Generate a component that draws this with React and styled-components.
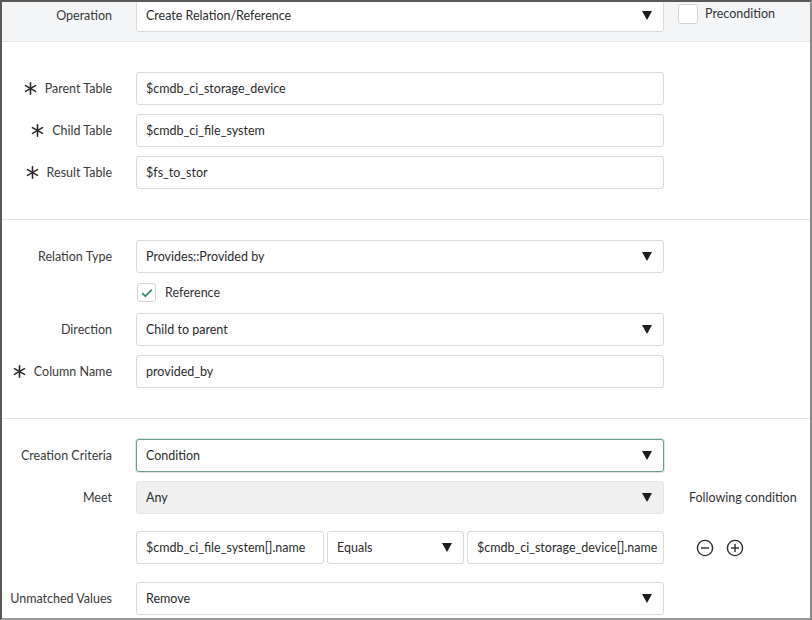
import styled, { createGlobalStyle } from "styled-components";

const GlobalStyle = createGlobalStyle`
  html, body {
    margin: 0;
    padding: 0;
    background: #fff;
  }
  body {
    font-family: "Lato", "Open Sans", sans-serif;
    color: #333;
  }
`;

const Frame = styled.div`
  box-sizing: border-box;
  width: 812px;
  height: 620px;
  border-top: 2px solid #5a5a5a;
  border-left: 2px solid #5a5a5a;
  border-right: 2px solid #8a8a8a;
  border-bottom: 2px solid #9a9a9a;
  overflow: hidden;
  display: flex;
  flex-direction: column;
  background: #fff;
`;

const Section = styled.div`
  display: flex;
  flex-direction: column;
  padding: ${(p) => p.$pad};
  background: ${(p) => (p.$shaded ? "#f4f5f7" : "#fff")};
  border-bottom: ${(p) => (p.$last ? "none" : "1px solid #e2e3e5")};
`;

const Row = styled.div`
  display: grid;
  grid-template-columns: 110px 528px 1fr;
  column-gap: 24px;
  align-items: center;
  margin-top: ${(p) => p.$mt || 0}px;
`;

const Label = styled.div`
  display: flex;
  justify-content: flex-end;
  align-items: center;
  gap: 8px;
  font-size: 12.5px;
  color: #3a3a3a;
  white-space: nowrap;
`;

const Field = styled.div`
  box-sizing: border-box;
  height: ${(p) => p.$h || 33}px;
  display: flex;
  align-items: center;
  justify-content: space-between;
  padding: 0 11px 0 9px;
  font-size: 12.5px;
  color: #2b2b2b;
  white-space: nowrap;
  overflow: hidden;
  background: ${(p) => (p.$muted ? "#f0f0f0" : "#fff")};
  border: 1px solid ${(p) => (p.$focus ? "#6f9c90" : p.$muted ? "#e4e4e4" : "#dadada")};
  border-radius: 3px;
  box-shadow: ${(p) => (p.$focus ? "0 0 0 1px rgba(111,156,144,0.25)" : "none")};
`;

const Side = styled.div`
  display: flex;
  align-items: center;
  gap: ${(p) => p.$gap || 8}px;
  margin-left: ${(p) => p.$ml || 0}px;
  font-size: 12.5px;
  color: #333;
  white-space: nowrap;
`;

const PreconditionCell = styled.div`
  box-sizing: border-box;
  align-self: stretch;
  display: flex;
  align-items: flex-start;
  gap: 7px;
  margin-left: -10px;
  padding-top: 6px;
  font-size: 12.5px;
  color: #333;
  white-space: nowrap;
`;

const PreconditionText = styled.span`
  line-height: 14px;
  margin-top: 3px;
`;

const Box = styled.span`
  box-sizing: border-box;
  width: ${(p) => p.$size}px;
  height: ${(p) => p.$size}px;
  border: 1px solid #d4d4d4;
  border-radius: 3px;
  background: #fff;
  display: inline-flex;
  align-items: center;
  justify-content: center;
  flex: none;
`;

const CheckLine = styled.div`
  display: flex;
  align-items: center;
  gap: 9px;
  height: 19px;
  padding-left: 1px;
  font-size: 12.5px;
  color: #333;
`;

const ConditionGrid = styled.div`
  display: grid;
  grid-template-columns: 188px 137px 1fr;
  column-gap: 3px;
`;

const IconButton = styled.span`
  display: inline-flex;
  width: 18px;
  height: 18px;
`;

const Caret = () => (
  <svg width="10" height="9" viewBox="0 0 10 9">
    <path d="M0 0 H10 L5 9 Z" fill="#1e1e1e" />
  </svg>
);

const Star = () => (
  <svg width="13" height="13" viewBox="0 0 13 13">
    <g stroke="#2a2a2a" strokeWidth="1.6" strokeLinecap="round">
      <line x1="6.5" y1="0.8" x2="6.5" y2="12.2" />
      <line x1="1.5" y1="3.6" x2="11.5" y2="9.4" />
      <line x1="1.5" y1="9.4" x2="11.5" y2="3.6" />
    </g>
  </svg>
);

const Select = ({ value, ...rest }) => (
  <Field {...rest}>
    <span>{value}</span>
    <Caret />
  </Field>
);

const FieldLabel = ({ text, required }) => (
  <Label>
    {required && <Star />}
    <span>{text}</span>
  </Label>
);

const CircleIcon = ({ plus }) => (
  <IconButton>
    <svg width="18" height="18" viewBox="0 0 18 18" fill="none" stroke="#2a2a2a" strokeWidth="1.4">
      <circle cx="9" cy="9" r="7.6" />
      <line x1="5" y1="9" x2="13" y2="9" />
      {plus && <line x1="9" y1="5" x2="9" y2="13" />}
    </svg>
  </IconButton>
);

export default function App() {
  return (
    <>
      <GlobalStyle />
      <Frame>
        <Section $shaded $pad="0 0 9px">
          <Row $mt={-4}>
            <FieldLabel text="Operation" />
            <Select value="Create Relation/Reference" $h={34} />
            <PreconditionCell>
              <Box $size={20} />
              <PreconditionText>Precondition</PreconditionText>
            </PreconditionCell>
          </Row>
        </Section>

        <Section $pad="30px 0 30px">
          <Row>
            <FieldLabel text="Parent Table" required />
            <Field>$cmdb_ci_storage_device</Field>
          </Row>
          <Row $mt={9}>
            <FieldLabel text="Child Table" required />
            <Field>$cmdb_ci_file_system</Field>
          </Row>
          <Row $mt={9}>
            <FieldLabel text="Result Table" required />
            <Field>$fs_to_stor</Field>
          </Row>
        </Section>

        <Section $pad="20px 0 30px">
          <Row>
            <FieldLabel text="Relation Type" />
            <Select value="Provides::Provided by" />
          </Row>
          <Row $mt={10}>
            <span />
            <CheckLine>
              <Box $size={19}>
                <svg width="12" height="10" viewBox="0 0 12 10">
                  <path d="M1.2 5.2 L4.4 8.2 L10.8 1.6" fill="none" stroke="#3f8a6c" strokeWidth="1.8" />
                </svg>
              </Box>
              Reference
            </CheckLine>
          </Row>
          <Row $mt={11}>
            <FieldLabel text="Direction" />
            <Select value="Child to parent" />
          </Row>
          <Row $mt={9}>
            <FieldLabel text="Column Name" required />
            <Field>provided_by</Field>
          </Row>
        </Section>

        <Section $last $pad="20px 0 0">
          <Row>
            <FieldLabel text="Creation Criteria" />
            <Select value="Condition" $focus />
          </Row>
          <Row $mt={9}>
            <FieldLabel text="Meet" />
            <Select value="Any" $muted />
            <Side $ml={1}>Following condition</Side>
          </Row>
          <Row $mt={17}>
            <span />
            <ConditionGrid>
              <Field>$cmdb_ci_file_system[].name</Field>
              <Select value="Equals" />
              <Field>$cmdb_ci_storage_device[].name</Field>
            </ConditionGrid>
            <Side $ml={8} $gap={12}>
              <CircleIcon />
              <CircleIcon plus />
            </Side>
          </Row>
          <Row $mt={18}>
            <FieldLabel text="Unmatched Values" />
            <Select value="Remove" />
          </Row>
        </Section>
      </Frame>
    </>
  );
}
